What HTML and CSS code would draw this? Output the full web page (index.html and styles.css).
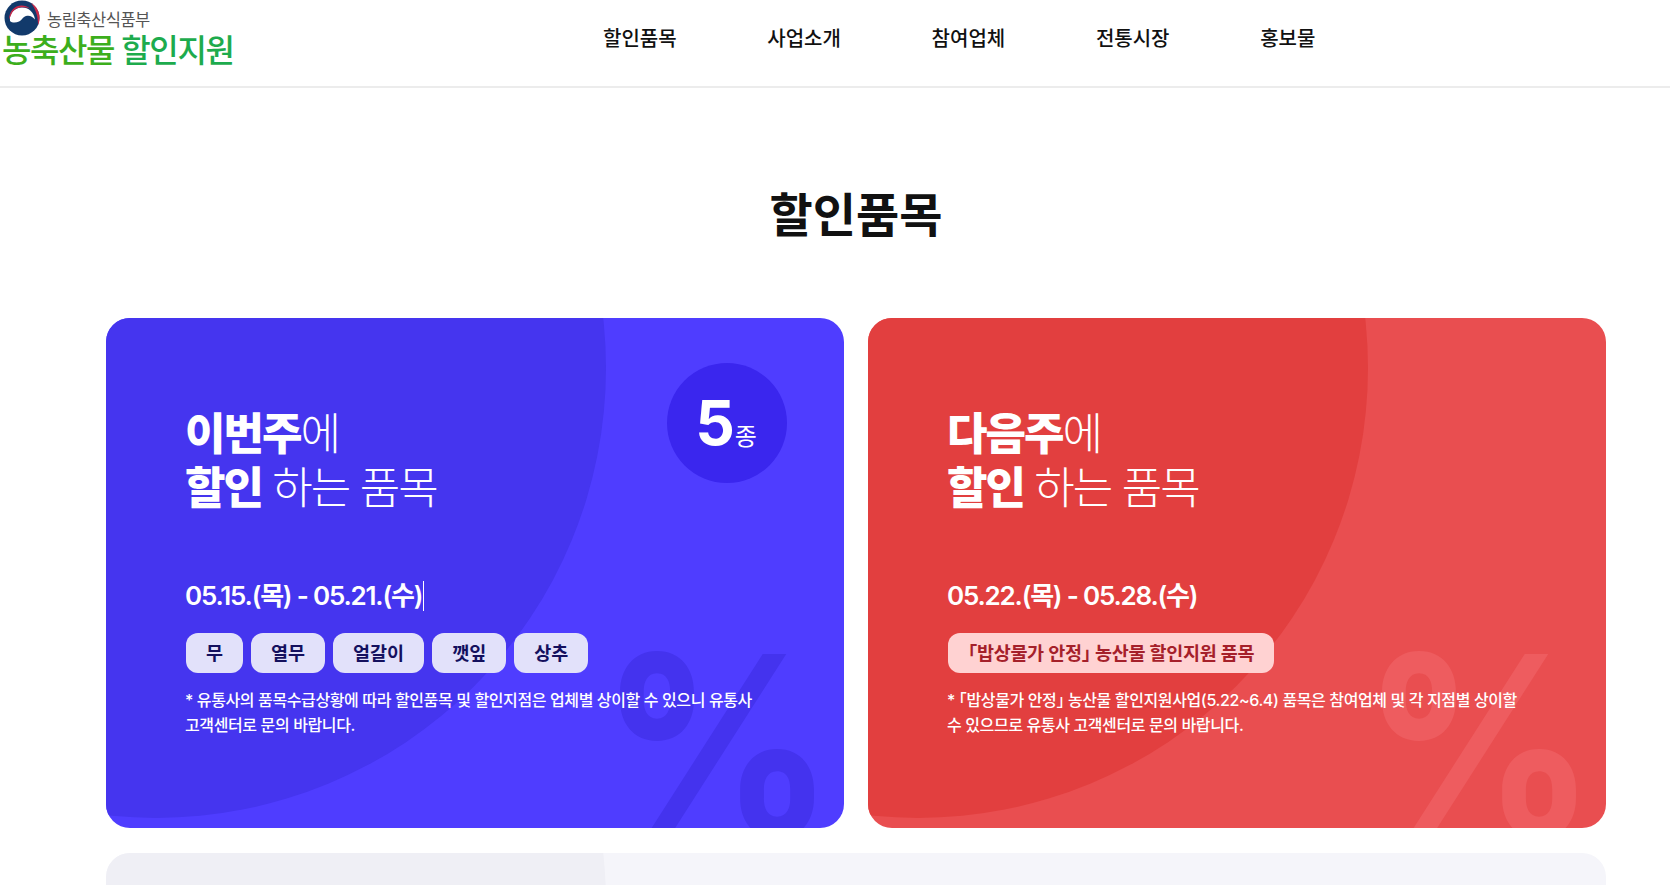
FILE: index.html
```html
<!DOCTYPE html>
<html lang="ko">
<head>
<meta charset="utf-8">
<title>농축산물 할인지원</title>
<link rel="stylesheet" href="styles.css">
</head>
<body>
<header class="header">
  <a class="logo" href="#">
    <span class="logo-top">
      <svg class="emblem" viewBox="0 0 36 36" width="36" height="36" aria-hidden="true">
        <circle cx="18" cy="18" r="17.500" fill="#123a6b"/>
        <path d="M27 3C32.500 6 35.500 11.500 35.500 18c0 2.500-.5 5-1.500 7 .2-8-2.300-16-7-22Z" fill="#c9294a"/>
        <path d="M6 21C5 13 11 7.500 18 7.500c6.500 0 12 4.500 13 12-2.500-3.500-6-4.500-9-3.500-3.500 1.200-4 4-7 5.500-3 1.500-7 1.500-9-.5Z" fill="#fff"/>
        <path d="M5 19.500C5 11.500 10.500 5.500 17.500 5.500c3.500 0 6 1 8.500 3-8-3-16-1-18.500 5.500C6.700 15.500 6 17.500 5 19.500Z" fill="#c9294a"/>
      </svg>
      <span class="ministry">농림축산식품부</span>
    </span>
    <span class="logo-main"><span class="logo-a">농축산물</span> <span class="logo-b">할인지원</span></span>
  </a>
  <nav class="nav">
    <a href="#">할인품목</a>
    <a href="#">사업소개</a>
    <a href="#">참여업체</a>
    <a href="#">전통시장</a>
    <a href="#">홍보물</a>
  </nav>
</header>
<main class="main">
  <h1 class="page-title">할인품목</h1>
  <div class="cards">
    <section class="card card-blue">
      <span class="percent">%</span>
      <div class="badge"><b>5</b><span>종</span></div>
      <div class="card-body">
        <h2 class="card-title"><b>이번주</b>에<br><b>할인</b> 하는 품목</h2>
        <p class="date">05.15.(목) - 05.21.(수)<span class="caret"></span></p>
        <ul class="tags">
          <li>무</li><li>열무</li><li>얼갈이</li><li>깻잎</li><li>상추</li>
        </ul>
        <p class="note">* 유통사의 품목수급상황에 따라 할인품목 및 할인지점은 업체별 상이할 수 있으니 유통사 고객센터로 문의 바랍니다.</p>
      </div>
    </section>
    <section class="card card-red">
      <span class="percent">%</span>
      <div class="card-body">
        <h2 class="card-title"><b>다음주</b>에<br><b>할인</b> 하는 품목</h2>
        <p class="date">05.22.(목) - 05.28.(수)</p>
        <ul class="tags">
          <li><span class="bk">「</span>밥상물가 안정<span class="bk">」</span> 농산물 할인지원 품목</li>
        </ul>
        <p class="note">* <span class="bk">「</span>밥상물가 안정<span class="bk">」</span> 농산물 할인지원사업(5.22~6.4) 품목은 참여업체 및 각 지점별 상이할 수 있으므로 유통사 고객센터로 문의 바랍니다.</p>
      </div>
    </section>
    <section class="card card-grey"></section>
  </div>
</main>
</body>
</html>
```
FILE: styles.css
```css
* { box-sizing: border-box; }
html, body { margin: 0; padding: 0; height: 885px; overflow: hidden; }
body {
  background: #fff;
  color: #111;
  font-family: "Inter", "Noto Sans CJK KR", "Noto Sans", sans-serif;
}
a { color: inherit; text-decoration: none; }
.bk { font-feature-settings: "halt"; }

.header {
  height: 88px;
  border-bottom: 2px solid #ececec;
  display: flex;
  padding-left: 2px;
}
.logo { display: flex; flex-direction: column; width: 601px; }
.logo-top { display: flex; align-items: center; height: 35px; padding-top: 1px; gap: 7px; padding-left: 2px; }
.emblem { display: block; flex: none; }
.ministry { font-size: 16.5px; letter-spacing: -0.5px; color: #555; margin-top: 1px; font-weight: 400; }
.logo-main { font-size: 32px; line-height: 32px; letter-spacing: -1.4px; font-weight: 500; white-space: nowrap; }
.logo-a { color: #3cae1c; }
.logo-b { color: #1dab4d; }

.nav { display: flex; gap: 90.700px; align-items: center; height: 74px; }
.nav a { font-size: 20px; font-weight: 500; color: #111; letter-spacing: 0; }

.main { padding: 0 64px 0 106px; }
.page-title {
  margin: 0;
  padding-top: 91px;
  height: 230px;
  text-align: center;
  font-size: 47px;
  line-height: 72px;
  font-weight: 600;
  color: #111;
}
.cards { display: grid; grid-template-columns: 738px 738px; gap: 25px 24px; }

.card {
  position: relative;
  overflow: hidden;
  height: 510px;
  border-radius: 24px;
  color: #fff;
}
.card::before {
  content: "";
  position: absolute;
  width: 900px;
  height: 900px;
  border-radius: 50%;
  left: -400px;
  top: -400px;
}
.card-blue { background: #4f3dff; }
.card-blue::before { background: #4535ef; }
.card-red { background: #e94e50; }
.card-red::before { background: #e23f3f; }
.card-grey { grid-column: 1 / 3; background: #f5f5fa; }
.card-grey::before { background: #efeff5; }

.percent {
  position: absolute;
  left: 493px;
  top: 302px;
  font-size: 250px;
  line-height: 1;
  font-weight: 700;
  transform: scaleX(0.93);
  transform-origin: left top;
}
.card-blue .percent { color: #4433ee; }
.card-red .percent { color: #ee5c5f; }

.badge {
  position: absolute;
  top: 45px;
  right: 57px;
  width: 120px;
  height: 120px;
  border-radius: 50%;
  background: #3a26ee;
  display: flex;
  align-items: baseline;
  justify-content: center;
  line-height: 120px;
}
.badge b { font-size: 62px; font-weight: 700; margin-left: -2px; }
.badge span { font-size: 24px; font-weight: 400; }

.card-body { position: relative; padding: 89px 80px 0; }
.card-title {
  margin: 0 0 0 -1px;
  font-size: 44px;
  line-height: 54px;
  font-weight: 200;
  letter-spacing: -2px;
}
.card-title b { font-weight: 800; }
.date {
  margin: 62px 0 0 -1px;
  font-size: 26px;
  line-height: 38px;
  font-weight: 600;
  letter-spacing: -1.2px;
  display: flex;
  align-items: center;
}
.caret { display: inline-block; width: 1px; height: 30px; background: #fff; margin-left: 1px; }
.tags { list-style: none; margin: 18px 0 0; padding: 0; display: flex; gap: 8px; }
.tags li {
  height: 40px;
  line-height: 40px;
  padding: 0 20px;
  border-radius: 12px;
  font-size: 18.5px;
  font-weight: 600;
}
.card-blue .tags li { background: #e2e1fa; color: #14105e; }
.card-red .tags li { background: #ffd2d2; color: #a5202a; letter-spacing: -0.3px; }
.note {
  margin: 15px 0 0 -1px;
  font-size: 16px;
  line-height: 25px;
  font-weight: 500;
  letter-spacing: -0.38px;
  width: 578px;
  word-break: keep-all;
}
```
